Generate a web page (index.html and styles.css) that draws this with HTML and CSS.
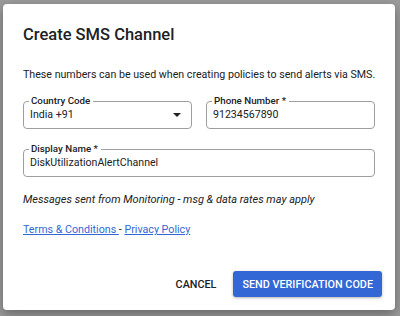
FILE: index.html
```html
<!DOCTYPE html>
<html lang="en">
<head>
    <meta charset="UTF-8">
    <meta name="viewport" content="width=device-width, initial-scale=1.0">
    <title>Create SMS Channel</title>
    <link rel="stylesheet" href="styles.css">
</head>
<body>
    <div class="dialog">
        <h2 class="dialog-title">Create SMS Channel</h2>
        <p class="intro">These numbers can be used when creating policies to send alerts via SMS.</p>

        <div class="row">
            <fieldset class="field">
                <legend>Country Code</legend>
                <div class="field-value select">
                    <span>India +91</span>
                    <span class="caret"></span>
                </div>
            </fieldset>
            <fieldset class="field">
                <legend>Phone Number *</legend>
                <input class="field-value" type="text" value="91234567890">
            </fieldset>
        </div>

        <fieldset class="field">
            <legend>Display Name *</legend>
            <input class="field-value" type="text" value="DiskUtilizationAlertChannel">
        </fieldset>

        <p class="note">Messages sent from Monitoring - msg &amp; data rates may apply</p>

        <p class="links">
            <a href="#">Terms &amp; Conditions </a>- <a href="#">Privacy Policy</a>
        </p>

        <div class="actions">
            <button class="btn btn-text">Cancel</button>
            <button class="btn btn-primary">Send verification code</button>
        </div>
    </div>
</body>
</html>
```

FILE: styles.css
```css
* {
    margin: 0;
    padding: 0;
    box-sizing: border-box;
}

body {
    font-family: Roboto, 'Noto Sans', Arial, sans-serif;
    background: #9b9b9b;
    color: #202124;
    padding: 4px 5px 6px 3px;
}

.dialog {
    background: white;
    border-radius: 4px;
    box-shadow: 0 4px 12px rgba(0,0,0,0.35);
    height: 306px;
    padding: 20px 20px 0 20px;
    display: flex;
    flex-direction: column;
}

.dialog-title {
    font-size: 16.5px;
    font-weight: 500;
    line-height: 22px;
}

.intro {
    font-size: 10.65px;
    line-height: 14px;
    margin-top: 22px;
    white-space: nowrap;
}

.row {
    display: flex;
    gap: 14px;
    margin-top: 13px;
}

.row .field {
    flex: 1;
}

.field {
    border: 1px solid #9e9e9e;
    border-radius: 4px;
    padding: 0;
    min-width: 0;
}

.row + .field {
    margin-top: 14px;
}

.field legend {
    font-size: 9.75px;
    font-weight: 500;
    line-height: 12px;
    margin-left: 5px;
    padding: 0 3px 0 2px;
}

.field-value {
    display: block;
    width: 100%;
    border: none;
    outline: none;
    background: none;
    font-family: inherit;
    font-size: 10.6px;
    line-height: 14px;
    color: #202124;
    padding: 1px 6px 6px 6px;
}

.select {
    display: flex;
    justify-content: space-between;
    align-items: center;
    padding-right: 10px;
}

.caret {
    width: 0;
    height: 0;
    border-left: 4px solid transparent;
    border-right: 4px solid transparent;
    border-top: 4px solid #202124;
}

.note {
    font-size: 11px;
    font-style: italic;
    line-height: 14px;
    margin-top: 16px;
}

.links {
    font-size: 10.7px;
    line-height: 14px;
    margin-top: 16px;
}

.links a {
    color: #3367d6;
}

.actions {
    margin-top: auto;
    margin-bottom: 13px;
    margin-right: -7px;
    display: flex;
    justify-content: flex-end;
    align-items: center;
    gap: 8px;
}

.btn {
    font-family: inherit;
    font-size: 10.8px;
    font-weight: 500;
    text-transform: uppercase;
    border: none;
    border-radius: 3px;
    height: 26px;
    padding: 0 9px;
    cursor: pointer;
    background: none;
}

.btn-text {
    color: #202124;
}

.btn-primary {
    background: #3367d6;
    color: white;
    box-shadow: 0 1px 3px rgba(0,0,0,0.3);
}
```
